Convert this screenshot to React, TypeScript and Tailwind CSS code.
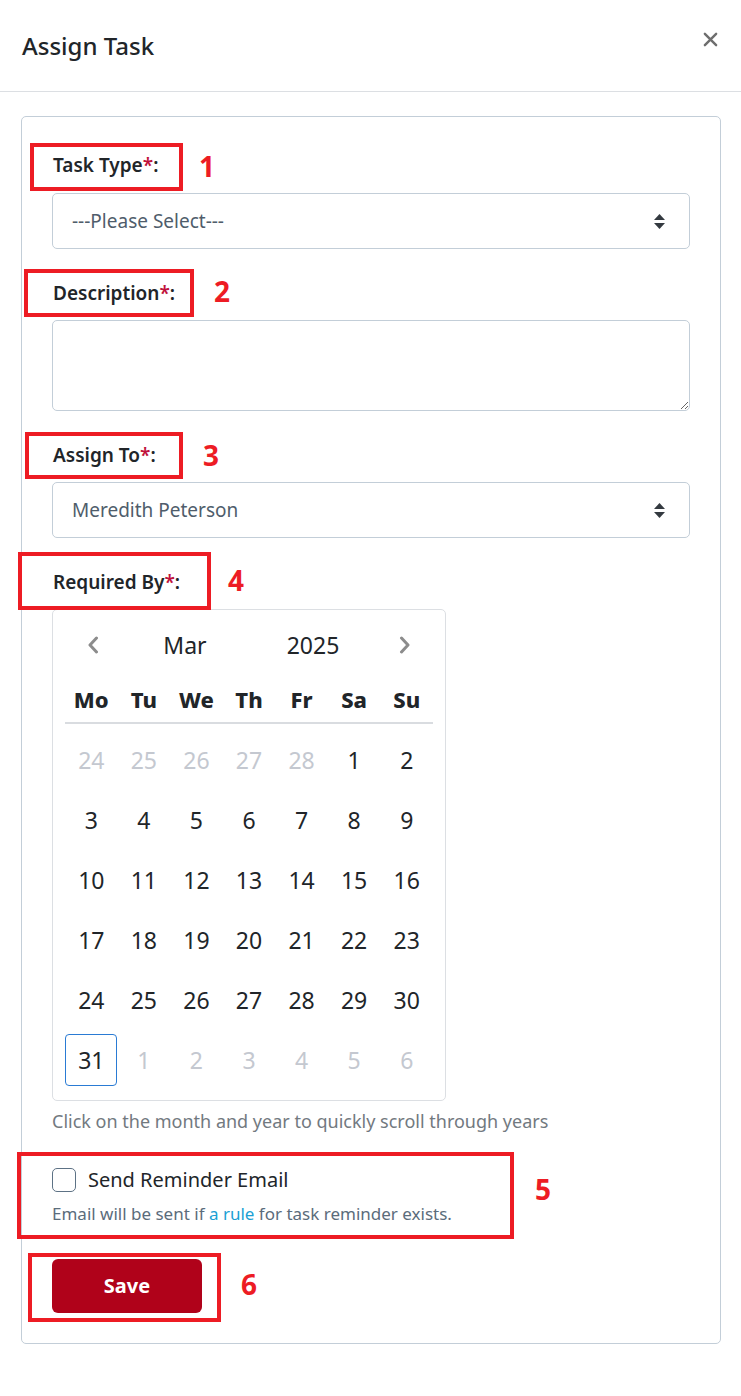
import { ReactNode } from "react";

const WEEKDAYS = ["Mo", "Tu", "We", "Th", "Fr", "Sa", "Su"];

// March 2025 grid, Monday first
const DAYS: { d: number; muted?: boolean; selected?: boolean }[] = [
  ...[24, 25, 26, 27, 28].map(d => ({ d, muted: true })),
  ...Array.from({ length: 31 }, (_, i) => ({ d: i + 1, selected: i + 1 === 31 })),
  ...[1, 2, 3, 4, 5, 6].map(d => ({ d, muted: true })),
];

function Marker({ n, className }: { n: number; className: string }) {
  return (
    <span
      className={`absolute -translate-x-1/2 -translate-y-1/2 text-[28px] font-bold leading-none text-[#ed1c24] ${className}`}
    >
      {n}
    </span>
  );
}

function FieldLabel({
  children,
  box,
  marker,
  gap = "mb-[13px]",
}: {
  children: ReactNode;
  box: string;
  marker: ReactNode;
  gap?: string;
}) {
  return (
    <div className={`relative mt-[30px] h-[28px] ${gap}`}>
      <span className={`absolute border-[4px] border-[#ed1c24] ${box}`} />
      <label className="relative block pl-px text-[19px] leading-[28px] font-semibold text-[#212529]">
        {children}
        <span className="text-[#c0123c]">*</span>:
      </label>
      {marker}
    </div>
  );
}

function SelectBox({ value }: { value: string }) {
  return (
    <div className="flex h-[56px] items-center justify-between rounded-[5px] border border-[#c3ced8] pl-[19px] pr-[24px]">
      <span className="text-[19px] text-[#4f5d6b]">{value}</span>
      <svg width="11" height="15" viewBox="0 0 11 15">
        <path d="M5.5 0L11 6H0z" fill="#343a40" />
        <path d="M5.5 15L11 9H0z" fill="#343a40" />
      </svg>
    </div>
  );
}

function Chevron({ dir }: { dir: "left" | "right" }) {
  return (
    <svg width="12" height="18" viewBox="0 0 12 18">
      <path
        d={dir === "left" ? "M9.5 2L3 9l6.5 7" : "M2.5 2L9 9l-6.5 7"}
        fill="none"
        stroke="#8c8c8c"
        strokeWidth="3"
        strokeLinecap="round"
        strokeLinejoin="round"
      />
    </svg>
  );
}

function Calendar() {
  return (
    <div className="w-[394px] rounded-[5px] border border-[#dcdfe3] px-[12px] pt-[12px] pb-[10px]">
      <div className="flex h-[46px] items-center">
        <div className="flex w-[56px] justify-center">
          <Chevron dir="left" />
        </div>
        <div className="flex flex-1 justify-center text-[23px] text-[#212529]">Mar</div>
        <div className="flex flex-1 justify-center text-[23px] text-[#212529]">2025</div>
        <div className="flex w-[56px] justify-center">
          <Chevron dir="right" />
        </div>
      </div>
      <div className="grid h-[56px] grid-cols-7 items-end border-b-2 border-[#d9dce0] pb-[8px]">
        {WEEKDAYS.map(w => (
          <div key={w} className="text-center text-[22px] leading-[30px] font-extrabold text-[#212529]">
            {w}
          </div>
        ))}
      </div>
      <div className="mt-[6px] grid grid-cols-7">
        {DAYS.map((day, i) => (
          <div key={i} className="flex h-[60px] items-center justify-center">
            <div
              className={`flex h-[52px] w-[52px] items-center justify-center rounded-[4px] text-[23px] ${
                day.selected ? "border border-[#2a7bd4]" : ""
              } ${day.muted ? "text-[#c4c8d0]" : "text-[#212529]"}`}
            >
              {day.d}
            </div>
          </div>
        ))}
      </div>
    </div>
  );
}

export default function App() {
  return (
    <div className="min-h-[1396px] bg-white font-['Noto_Sans',sans-serif] text-[#212529]">
      <div className="flex h-[92px] items-center justify-between border-b border-[#dcdfe3] pl-[22px] pr-[23px]">
        <h2 className="text-[24px] font-medium text-[#212529]">Assign Task</h2>
        <svg width="15" height="15" viewBox="0 0 16 16" className="-mt-[12px]">
          <path d="M2 2l12 12M14 2L2 14" stroke="#6e6e6e" strokeWidth="2.6" strokeLinecap="round" />
        </svg>
      </div>

      <div className="mt-[24px] mr-[20px] ml-[21px] rounded-[5px] border border-[#c3ced8] px-[30px] pt-[4px] pb-[30px]">
        <FieldLabel
          box="-left-[22px] -top-[8px] w-[153px] h-[48px]"
          gap="mb-[14px]"
          marker={<Marker n={1} className="left-[155px] top-[15px]" />}
        >
          Task Type
        </FieldLabel>
        <SelectBox value="---Please Select---" />

        <FieldLabel
          box="-left-[28px] -top-[10px] w-[170px] h-[48px]"
          marker={<Marker n={2} className="left-[170px] top-[12px]" />}
        >
          Description
        </FieldLabel>
        <textarea className="block h-[91px] w-full rounded-[5px] border border-[#c3ced8] outline-none" />

        <FieldLabel
          box="-left-[27px] -top-[9px] w-[158px] h-[47px]"
          marker={<Marker n={3} className="left-[159px] top-[14px]" />}
        >
          Assign To
        </FieldLabel>
        <SelectBox value="Meredith Peterson" />

        <FieldLabel
          box="-left-[34px] -top-[16px] w-[193px] h-[58px]"
          marker={<Marker n={4} className="left-[184px] top-[12px]" />}
        >
          Required By
        </FieldLabel>
        <Calendar />

        <p className="mt-[8px] text-[18px] leading-[24px] text-[#72797f]">
          Click on the month and year to quickly scroll through years
        </p>

        <div className="relative mt-[34px]">
          <span className="absolute -top-[15px] -left-[35px] h-[87px] w-[497px] border-[4px] border-[#ed1c24]" />
          <Marker n={5} className="left-[491px] top-[22px]" />
          <div className="relative flex items-center gap-[12px]">
            <span className="h-[24px] w-[24px] rounded-[5px] border-[1.5px] border-[#5d7285] bg-white" />
            <span className="text-[20px] leading-[26px] text-[#212529]">Send Reminder Email</span>
          </div>
          <p className="relative mt-[10px] text-[17px] leading-[22px] text-[#5b6c7b]">
            Email will be sent if <span className="text-[#1b9fd4]">a rule</span> for task reminder exists.
          </p>
        </div>

        <div className="relative mt-[34px] w-[150px]">
          <span className="absolute -top-[6px] -left-[24px] h-[69px] w-[193px] border-[4px] border-[#ed1c24]" />
          <Marker n={6} className="left-[197px] top-[25px]" />
          <button className="relative flex h-[54px] w-[150px] items-center justify-center rounded-[6px] bg-[#b0021a] text-[20px] font-bold text-white">
            Save
          </button>
        </div>
      </div>
    </div>
  );
}
